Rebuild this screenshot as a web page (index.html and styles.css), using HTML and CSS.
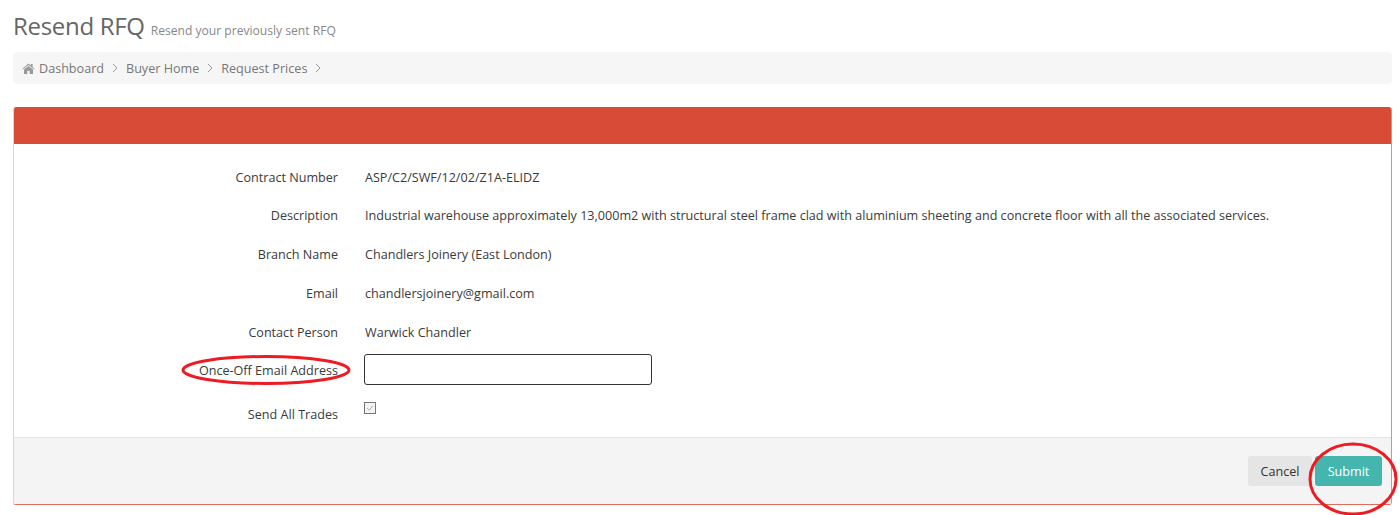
FILE: index.html
```html
<!DOCTYPE html>
<html lang="en">
<head>
  <meta charset="UTF-8" />
  <title>Resend RFQ</title>
  <link rel="stylesheet" href="styles.css">
</head>
<body>

  <!-- Page title -->
  <div class="page-title">
    <h1>Resend RFQ</h1>
    <small>Resend your previously sent RFQ</small>
  </div>

  <!-- Breadcrumb -->
  <ul class="breadcrumb">
    <li>
      <svg class="home-icon" viewBox="0 0 13 11"><path d="M6.5 0.6 0.2 5.9l0.6 0.7L6.5 1.9l5.7 4.7 0.6-0.7-2.2-1.8V1h-1.6v1.4zM2 6.6V11h3.3V7.7h2.4V11H11V6.6L6.5 2.9z"/></svg>
      <a href="#">Dashboard</a>
      <svg class="crumb-arrow" viewBox="0 0 6 10"><path d="M1 1l4 4-4 4"/></svg>
    </li>
    <li>
      <a href="#">Buyer Home</a>
      <svg class="crumb-arrow" viewBox="0 0 6 10"><path d="M1 1l4 4-4 4"/></svg>
    </li>
    <li>
      <a href="#">Request Prices</a>
      <svg class="crumb-arrow" viewBox="0 0 6 10"><path d="M1 1l4 4-4 4"/></svg>
    </li>
  </ul>

  <!-- Form panel -->
  <div class="panel">
    <div class="panel-heading"></div>
    <form class="panel-body">
      <div class="form-row">
        <label>Contract Number</label>
        <div class="value">ASP/C2/SWF/12/02/Z1A-ELIDZ</div>
      </div>
      <div class="form-row">
        <label>Description</label>
        <div class="value">Industrial warehouse approximately 13,000m2 with structural steel frame clad with aluminium sheeting and concrete floor with all the associated services.</div>
      </div>
      <div class="form-row">
        <label>Branch Name</label>
        <div class="value">Chandlers Joinery (East London)</div>
      </div>
      <div class="form-row">
        <label>Email</label>
        <div class="value">chandlersjoinery@gmail.com</div>
      </div>
      <div class="form-row">
        <label>Contact Person</label>
        <div class="value">Warwick Chandler</div>
      </div>
      <div class="form-row input-row">
        <label>Once-Off Email Address</label>
        <input type="text" class="text-input" />
      </div>
      <div class="form-row check-row">
        <label>Send All Trades</label>
        <span class="check-box">
          <svg viewBox="0 0 12 12"><path d="M2.5 6.2l2.4 2.4 4.6-5.2"/></svg>
        </span>
      </div>
    </form>
    <div class="panel-footer">
      <button type="button" class="btn btn-cancel">Cancel</button>
      <button type="button" class="btn btn-submit">Submit</button>
    </div>
  </div>

  <!-- Red marker annotations drawn over the screenshot -->
  <svg class="mark mark-label" viewBox="0 0 170 30"><ellipse cx="85" cy="15" rx="83" ry="13.5"/></svg>
  <svg class="mark mark-submit" viewBox="0 0 90 74"><ellipse cx="45" cy="37" rx="43" ry="35"/></svg>

</body>
</html>
```

FILE: styles.css
```css
* {
  margin: 0;
  padding: 0;
  box-sizing: border-box;
}

html, body {
  height: 515px;
  overflow: hidden;
}

body {
  position: relative;
  padding: 0 8px 0 13px;
  background: #fff;
  color: #3a3a3a;
  font-family: "Open Sans", sans-serif;
  font-size: 12.6px;
}

.page-title {
  display: flex;
  align-items: baseline;
  gap: 6px;
  height: 52px;
  padding-top: 9px;
  color: #666;
}

.page-title h1 {
  font-size: 24px;
  font-weight: 400;
  line-height: 33px;
  letter-spacing: -0.3px;
}

.page-title small {
  font-size: 12.1px;
  font-weight: 400;
  color: #888;
}

.breadcrumb {
  display: flex;
  align-items: center;
  height: 32px;
  margin-bottom: 23px;
  padding-left: 9px;
  background: #f6f6f6;
  border-radius: 4px;
  list-style: none;
}

.breadcrumb li {
  display: flex;
  align-items: center;
  margin-right: 8px;
}

.breadcrumb a {
  color: #777;
  text-decoration: none;
}

.home-icon {
  width: 13px;
  height: 11px;
  margin-right: 4px;
  fill: #999;
}

.crumb-arrow {
  width: 6px;
  height: 10px;
  margin-left: 8px;
  fill: none;
  stroke: #999;
  stroke-width: 1;
}

.panel {
  height: 398px;
  border: 1px solid #e66a5a;
  border-left-color: #efccc5;
  border-right-color: #e38d80;
  border-top: 0;
  border-radius: 3px;
  overflow: hidden;
}

.panel-heading {
  height: 37px;
  margin: 0 -1px;
  background: #d84b37;
}

.panel-body {
  height: 293px;
  padding-top: 13.7px;
}

.form-row {
  display: flex;
  align-items: center;
  height: 38.8px;
}

.form-row label {
  width: 324px;
  margin-right: 27px;
  text-align: right;
}

.input-row {
  height: 38px;
}

.text-input {
  width: 288px;
  height: 31px;
  margin: -2px 0 0 -1px;
  border: 1px solid #333;
  border-radius: 3px;
  background: #fff;
}

.check-row {
  align-items: flex-start;
  height: 40px;
  padding-top: 16.5px;
}

.check-box {
  width: 12px;
  height: 12px;
  margin: -4px 0 0 -1px;
  border: 1px solid #777;
  background: #f4f4f4;
}

.check-box svg {
  display: block;
  width: 10px;
  height: 10px;
  fill: none;
  stroke: #999;
  stroke-width: 1;
}

.panel-footer {
  display: flex;
  justify-content: flex-end;
  align-items: flex-start;
  gap: 3px;
  height: 68px;
  padding: 18px 9px 0 0;
  background: #f4f4f4;
  border-top: 1px solid #e4e4e4;
}

.btn {
  height: 30px;
  border: none;
  border-radius: 3px;
  font-family: inherit;
  font-size: 12.6px;
}

.btn-cancel {
  width: 64px;
  background: #e5e5e5;
  color: #333;
}

.btn-submit {
  width: 67px;
  background: #44b6ae;
  color: #fff;
}

.mark {
  position: absolute;
  fill: none;
  stroke: #ed1c24;
  stroke-width: 3;
}

.mark-label {
  left: 181px;
  top: 355px;
  width: 170px;
  height: 30px;
}

.mark-submit {
  left: 1308px;
  top: 442px;
  width: 90px;
  height: 74px;
}
```
